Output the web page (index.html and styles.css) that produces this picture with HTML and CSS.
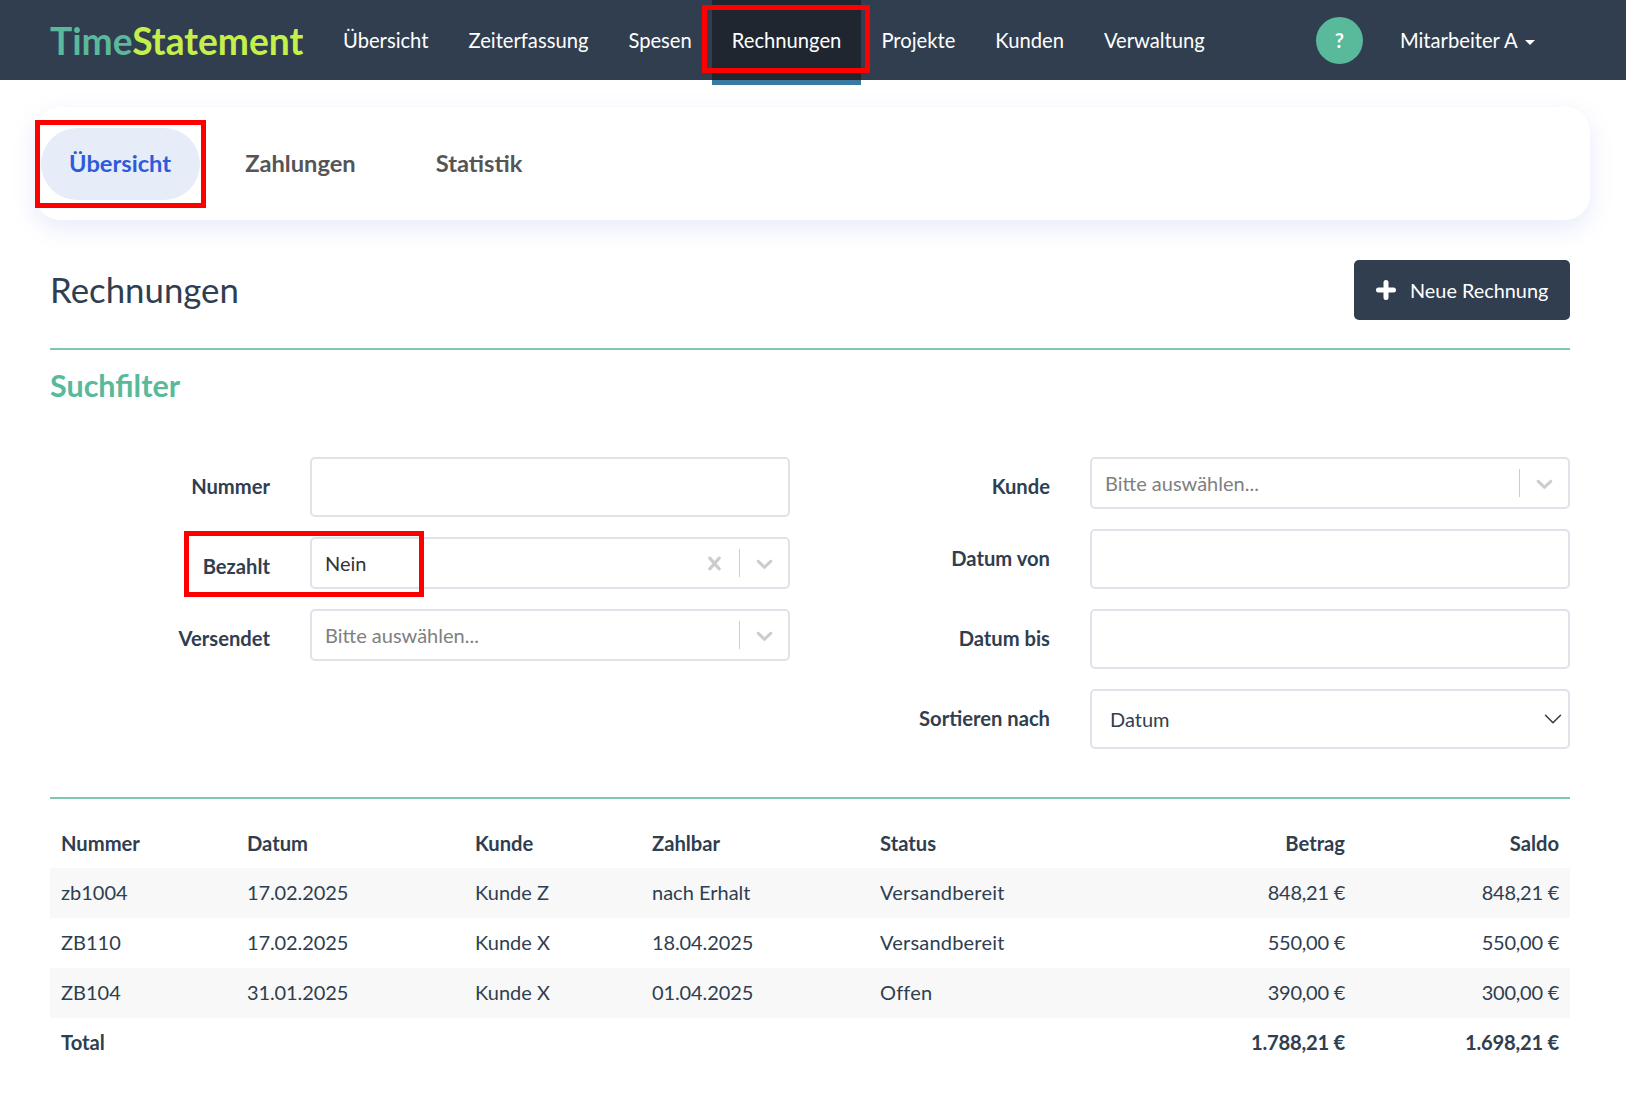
FILE: index.html
```html
<!DOCTYPE html>
<html lang="de">
<head>
<meta charset="utf-8">
<title>TimeStatement</title>
<link rel="stylesheet" href="styles.css">
</head>
<body>
<header class="navbar">
  <a class="logo"><span class="logo-time">Time</span><span class="logo-statement">Statement</span></a>
  <nav class="nav-links">
    <a class="nav-link">Übersicht</a>
    <a class="nav-link">Zeiterfassung</a>
    <a class="nav-link">Spesen</a>
    <a class="nav-link active">Rechnungen<span class="mark mark-nav"></span></a>
    <a class="nav-link">Projekte</a>
    <a class="nav-link">Kunden</a>
    <a class="nav-link">Verwaltung</a>
  </nav>
  <span class="help">?</span>
  <a class="user">Mitarbeiter A<span class="caret"></span></a>
</header>

<div class="tabs">
  <a class="tab active">Übersicht<span class="mark mark-tab"></span></a>
  <a class="tab">Zahlungen</a>
  <a class="tab">Statistik</a>
</div>

<main class="content">
  <div class="title-row">
    <h1 class="title">Rechnungen</h1>
    <button class="btn-new">
      <svg class="plus" viewBox="0 0 20 20" width="20" height="20"><path d="M10 2.5v15M2.5 10h15" fill="none" stroke="#fff" stroke-width="5" stroke-linecap="round"/></svg>
      Neue Rechnung
    </button>
  </div>
  <hr class="rule">
  <h2 class="subtitle">Suchfilter</h2>

  <form class="filters">
    <div class="column">
      <div class="field">
        <label class="label">Nummer</label>
        <input class="input" type="text">
      </div>
      <div class="field">
        <label class="label">Bezahlt</label>
        <div class="select">
          <span class="select-value">Nein</span>
          <svg class="ind" viewBox="0 0 20 20" width="27" height="27"><path d="M14.348 14.849c-0.469 0.469-1.229 0.469-1.697 0l-2.651-3.030-2.651 3.029c-0.469 0.469-1.229 0.469-1.697 0-0.469-0.469-0.469-1.229 0-1.697l2.758-3.15-2.759-3.152c-0.469-0.469-0.469-1.228 0-1.697s1.228-0.469 1.697 0l2.652 3.031 2.651-3.031c0.469-0.469 1.228-0.469 1.697 0s0.469 1.229 0 1.697l-2.758 3.152 2.758 3.15c0.469 0.469 0.469 1.229 0 1.698z"/></svg>
          <span class="sep"></span>
          <svg class="ind" viewBox="0 0 20 20" width="27" height="27"><path d="M4.516 7.548c0.436-0.446 1.043-0.481 1.576 0l3.908 3.747 3.908-3.747c0.533-0.481 1.141-0.446 1.574 0 0.436 0.445 0.408 1.197 0 1.615-0.406 0.418-4.695 4.502-4.695 4.502-0.217 0.223-0.502 0.335-0.787 0.335s-0.57-0.112-0.789-0.335c0 0-4.287-4.084-4.695-4.502s-0.436-1.17 0-1.615z"/></svg>
          <span class="mark mark-field"></span>
        </div>
      </div>
      <div class="field">
        <label class="label">Versendet</label>
        <div class="select">
          <span class="select-placeholder">Bitte auswählen...</span>
          <span class="sep"></span>
          <svg class="ind" viewBox="0 0 20 20" width="27" height="27"><path d="M4.516 7.548c0.436-0.446 1.043-0.481 1.576 0l3.908 3.747 3.908-3.747c0.533-0.481 1.141-0.446 1.574 0 0.436 0.445 0.408 1.197 0 1.615-0.406 0.418-4.695 4.502-4.695 4.502-0.217 0.223-0.502 0.335-0.787 0.335s-0.57-0.112-0.789-0.335c0 0-4.287-4.084-4.695-4.502s-0.436-1.17 0-1.615z"/></svg>
        </div>
      </div>
    </div>
    <div class="column">
      <div class="field">
        <label class="label">Kunde</label>
        <div class="select">
          <span class="select-placeholder">Bitte auswählen...</span>
          <span class="sep"></span>
          <svg class="ind" viewBox="0 0 20 20" width="27" height="27"><path d="M4.516 7.548c0.436-0.446 1.043-0.481 1.576 0l3.908 3.747 3.908-3.747c0.533-0.481 1.141-0.446 1.574 0 0.436 0.445 0.408 1.197 0 1.615-0.406 0.418-4.695 4.502-4.695 4.502-0.217 0.223-0.502 0.335-0.787 0.335s-0.57-0.112-0.789-0.335c0 0-4.287-4.084-4.695-4.502s-0.436-1.17 0-1.615z"/></svg>
        </div>
      </div>
      <div class="field">
        <label class="label">Datum von</label>
        <input class="input" type="text">
      </div>
      <div class="field">
        <label class="label">Datum bis</label>
        <input class="input" type="text">
      </div>
      <div class="field">
        <label class="label">Sortieren nach</label>
        <div class="sort">
          <span>Datum</span>
          <svg viewBox="0 0 16 16" width="20" height="20"><path d="m2 5 6 6 6-6" fill="none" stroke="#343a40" stroke-width="1.2" stroke-linecap="round" stroke-linejoin="round"/></svg>
        </div>
      </div>
    </div>
  </form>

  <hr class="rule rule-table">

  <table class="table">
    <thead>
      <tr>
        <th class="col-num">Nummer</th><th class="col-date">Datum</th><th class="col-cust">Kunde</th><th class="col-due">Zahlbar</th><th class="col-status">Status</th><th class="num col-amt">Betrag</th><th class="num col-bal">Saldo</th>
      </tr>
    </thead>
    <tbody>
      <tr><td>zb1004</td><td class="date">17.02.2025</td><td>Kunde Z</td><td>nach Erhalt</td><td class="state">Versandbereit</td><td class="num money">848,21 €</td><td class="num money">848,21 €</td></tr>
      <tr><td>ZB110</td><td class="date">17.02.2025</td><td>Kunde X</td><td class="date">18.04.2025</td><td class="state">Versandbereit</td><td class="num money">550,00 €</td><td class="num money">550,00 €</td></tr>
      <tr><td>ZB104</td><td class="date">31.01.2025</td><td>Kunde X</td><td class="date">01.04.2025</td><td class="state">Offen</td><td class="num money">390,00 €</td><td class="num money">300,00 €</td></tr>
    </tbody>
    <tfoot>
      <tr><th>Total</th><th></th><th></th><th></th><th></th><th class="num money">1.788,21 €</th><th class="num money">1.698,21 €</th></tr>
    </tfoot>
  </table>
</main>
</body>
</html>
```

FILE: styles.css
```css
* { box-sizing: border-box; }
html, body { margin: 0; padding: 0; }
body {
  font-family: Lato, "Open Sans", sans-serif;
  font-size: 20px;
  color: #2f3e50;
  background: #fff;
  height: 1118px;
  overflow: hidden;
}

/* Navbar */
.navbar {
  display: flex;
  align-items: center;
  height: 80px;
  padding-left: 50px;
  background: #303e50;
  color: #fff;
  font-size: 20.2px;
}
.logo {
  display: block;
  width: 253px;
  margin-right: 20px;
  font-size: 37.2px;
  font-weight: 700;
  white-space: nowrap;
}
.logo-time { color: #5bb89b; }
.logo-statement { color: #c5f04c; }
.nav-links { display: flex; height: 80px; }
.nav-link {
  position: relative;
  display: flex;
  align-items: center;
  padding: 0 20px;
  color: #fff;
}
.nav-link.active {
  height: 85px;
  padding-bottom: 5px;
  background: linear-gradient(#1f2630 0 80px, #3b7aa0 80px);
}
.help {
  display: flex;
  align-items: center;
  justify-content: center;
  width: 47px;
  height: 47px;
  margin-left: 91px;
  border-radius: 50%;
  background: #59b99b;
  font-size: 20px;
  font-weight: 700;
  color: #fff;
}
.user { margin-left: 37px; color: #fff; }
.caret {
  display: inline-block;
  margin-left: 7px;
  vertical-align: 3px;
  border-top: 5px solid #fff;
  border-left: 5px solid transparent;
  border-right: 5px solid transparent;
}

/* Red annotation frames */
.mark {
  position: absolute;
  border: 5px solid #f00;
  pointer-events: none;
}
.mark-nav { left: -10px; right: -9px; top: 5px; bottom: 12px; }
.mark-tab { left: -6px; right: -6px; top: -8px; bottom: -8px; }
.mark-field { left: -128px; top: -8px; width: 240px; height: 66px; }

/* Tabs */
.tabs {
  display: flex;
  gap: 17px;
  align-items: center;
  height: 113px;
  margin: 27px 36px 0 35px;
  padding: 0 6px;
  background: #fff;
  border-radius: 25px;
  box-shadow: 0 8px 24px rgba(90, 110, 220, 0.14);
}
.tab {
  position: relative;
  display: flex;
  align-items: center;
  height: 72px;
  padding: 0 29px 2px 28px;
  border-radius: 36px;
  font-size: 23.7px;
  font-weight: 700;
  color: #555;
}
.tab:last-child { margin-left: 6px; }
.tab.active {
  background: #e6edf8;
  color: #2d5bdc;
}

/* Content */
.content { padding: 0 56px 0 50px; }
.title-row {
  display: flex;
  justify-content: space-between;
  align-items: center;
  margin-top: 40px;
}
.title {
  margin: 0;
  padding-bottom: 2px;
  font-size: 34.8px;
  font-weight: 400;
  color: #2f3e50;
}
.btn-new {
  display: flex;
  align-items: center;
  gap: 14px;
  height: 60px;
  width: 216px;
  padding: 0 0 0 22px;
  border: 0;
  border-radius: 5px;
  background: #303e50;
  color: #fff;
  font: 400 19.85px Lato, sans-serif;
}
.plus { flex: none; }
.rule {
  height: 2px;
  margin: 28px 0 0;
  border: 0;
  background: #7fc7ae;
}
.rule-table { margin-top: 48px; }
.subtitle {
  margin: 17px 0 0;
  font-size: 30.5px;
  font-weight: 700;
  line-height: 36px;
  color: #59b99b;
}

/* Filters */
.filters {
  display: grid;
  grid-template-columns: 740px 740px;
  gap: 40px;
  margin-top: 54px;
}
.column { display: flex; flex-direction: column; gap: 20px; }
.field {
  display: grid;
  grid-template-columns: 220px 480px;
  column-gap: 40px;
  align-items: start;
}
.label {
  padding-top: 17px;
  line-height: 24px;
  text-align: right;
  font-size: 20.2px;
  font-weight: 700;
  color: #2f3e50;
}
.input {
  display: block;
  width: 100%;
  height: 60px;
  border: 2px solid #dee2e9;
  border-radius: 5px;
  background: #fff;
}
.select {
  position: relative;
  display: flex;
  align-items: center;
  height: 52px;
  padding: 0 10px 0 13px;
  border: 2px solid #dee2e9;
  border-radius: 5px;
  background: #fff;
}
.select-value, .select-placeholder { flex: 1; }
.select-value { color: #333; }
.select-placeholder { color: #808080; }
.ind { fill: #ccc; flex: none; }
.sep {
  flex: none;
  width: 1px;
  height: 28px;
  margin: 0 11px;
  background: #ccc;
}
.sort {
  display: flex;
  align-items: center;
  justify-content: space-between;
  height: 60px;
  padding: 0 5px 0 18px;
  border: 2px solid #dee2e9;
  border-radius: 5px;
  background: #fff;
}

/* Table */
.table {
  width: 100%;
  margin-top: 19px;
  border-collapse: collapse;
  table-layout: fixed;
}
.table th, .table td {
  height: 50px;
  padding: 0 11px;
  text-align: left;
  font-weight: 400;
  color: #2f3e50;
}
.table th { font-size: 20.2px; font-weight: 700; }
.table tbody td, .table tfoot th { padding-bottom: 2px; }
.table .num { text-align: right; padding-right: 10px; }
.table .num:last-child { padding-right: 11px; }
.table .money { letter-spacing: -0.25px; }
.table .date { letter-spacing: -0.1px; }
.table .state { letter-spacing: 0.2px; }
.table tbody tr:nth-child(odd) { background: #f8f8f8; }
.col-num { width: 186px; }
.col-date { width: 228px; }
.col-cust { width: 177px; }
.col-due { width: 228px; }
.col-status { width: 250px; }
.col-amt { width: 236px; }
.col-bal { width: 215px; }
```
